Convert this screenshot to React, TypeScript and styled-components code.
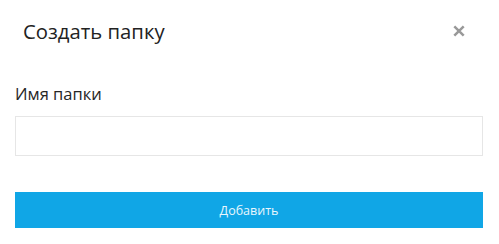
import React from "react";
import styled, { createGlobalStyle } from "styled-components";

const Global = createGlobalStyle`
  html, body { margin: 0; padding: 0; background: #fff; }
  body { font-family: "Open Sans", "Noto Sans", sans-serif; }
  * { box-sizing: border-box; }
`;

const Dialog = styled.div`
  width: 499px;
  height: 244px;
  background: #fff;
  display: flex;
  flex-direction: column;
  padding: 0 16px 0 15px;
`;

const Header = styled.div`
  display: flex;
  align-items: center;
  justify-content: space-between;
  padding: 17px 18px 0 8px;
  height: 45px;
`;

const Title = styled.h2`
  margin: 0;
  font-size: 20.3px;
  line-height: 28px;
  font-weight: 400;
  color: #222;
`;

const Close = styled.button`
  border: 0;
  background: none;
  padding: 0;
  width: 13px;
  height: 13px;
  display: flex;
  align-items: center;
  justify-content: center;
  cursor: pointer;
  margin-top: -1px;
`;

const Label = styled.label`
  display: block;
  margin-top: 38px;
  font-size: 16.5px;
  line-height: 22px;
  color: #262626;
`;

const Input = styled.input`
  display: block;
  margin-top: 11px;
  width: 100%;
  height: 40px;
  border: 1px solid #e6e6e6;
  outline: none;
  padding: 0 12px;
  font: inherit;
  font-size: 14px;
`;

const Submit = styled.button`
  margin-top: 36px;
  width: 100%;
  height: 36px;
  border: 0;
  background: #10a6e6;
  color: #e9f6fd;
  font-family: "Open Sans", "Noto Sans", sans-serif;
  font-size: 12.5px;
  cursor: pointer;
`;

export default function App() {
  return (
    <>
      <Global />
      <Dialog>
        <Header>
          <Title>Создать папку</Title>
          <Close aria-label="close">
            <svg width="12" height="12" viewBox="0 0 12 12">
              <path d="M1.3 1.3 L10.7 10.7 M10.7 1.3 L1.3 10.7" stroke="#999" strokeWidth="2.5" />
            </svg>
          </Close>
        </Header>
        <Label htmlFor="name">Имя папки</Label>
        <Input id="name" />
        <Submit>Добавить</Submit>
      </Dialog>
    </>
  );
}
